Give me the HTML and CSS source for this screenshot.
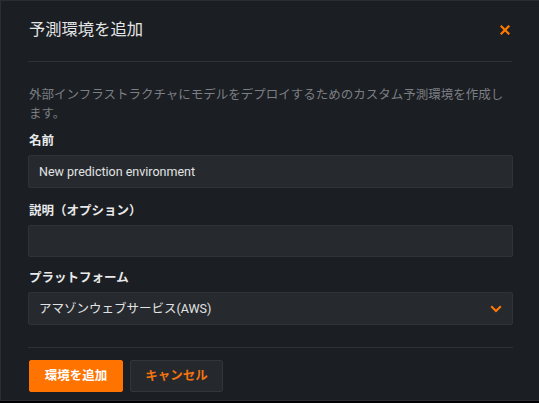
FILE: index.html
```html
<!DOCTYPE html>
<html lang="ja">
<head>
<meta charset="utf-8">
<title>予測環境を追加</title>
<link rel="stylesheet" href="styles.css">
</head>
<body>
<div class="modal">
  <div class="header">
    <h1 class="title">予測環境を追加</h1>
    <button class="close" aria-label="閉じる">
      <svg width="10" height="10" viewBox="0 0 10 10"><path d="M1.5 1.5 L8.5 8.5 M8.5 1.5 L1.5 8.5" stroke="#ff7a00" stroke-width="2.2" stroke-linecap="square" fill="none"/></svg>
    </button>
  </div>
  <div class="body">
    <p class="desc">外部インフラストラクチャにモデルをデプロイするためのカスタム予測環境を作成します。</p>
    <div class="group">
      <label class="label">名前</label>
      <div class="input">New prediction environment</div>
    </div>
    <div class="group">
      <label class="label">説明（オプション）</label>
      <div class="input short"></div>
    </div>
    <div class="group">
      <label class="label">プラットフォーム</label>
      <div class="input select">
        <span>アマゾンウェブサービス(AWS)</span>
        <svg class="chev" width="12" height="8" viewBox="0 0 12 8"><path d="M1.2 1.2 L6 6 L10.8 1.2" stroke="#ff7a00" stroke-width="2" fill="none"/></svg>
      </div>
    </div>
  </div>
  <div class="footer">
    <button class="btn primary">環境を追加</button>
    <button class="btn secondary">キャンセル</button>
  </div>
</div>
</body>
</html>
```

FILE: styles.css
```css
* { box-sizing: border-box; }
html, body {
  margin: 0;
  padding: 0;
  background: #000;
}
body {
  font-family: Roboto, "Noto Sans CJK JP", sans-serif;
  width: 539px;
  height: 403px;
  overflow: hidden;
}
.modal {
  width: 540px;
  height: 401px;
  background: #1b1e22;
  border: 1px solid #2a2e33;
  display: flex;
  flex-direction: column;
}
.header {
  height: 61px;
  margin: 0 27px 0 27px;
  border-bottom: 1px solid #2e3236;
  display: flex;
  align-items: center;
  justify-content: space-between;
  padding-left: 1px;
  padding-bottom: 3px;
}
.title {
  margin: 0;
  font-size: 16.3px;
  font-weight: 400;
  color: #e4e5e6;
  line-height: 22px;
}
.close {
  background: none;
  border: 0;
  padding: 0;
  margin-right: 2px;
  width: 10px;
  height: 10px;
  display: flex;
}
.body {
  padding: 23px 0 0 27px;
  width: 512px;
}
.desc {
  margin: 0 0 9px 1px;
  font-size: 12.5px;
  line-height: 19px;
  color: #7b7f84;
}
.group {
  margin-bottom: 12px;
}
.group:first-of-type { margin-bottom: 14px; }
.group:last-child { margin-bottom: 0; }
.label {
  display: block;
  margin-left: 1px;
  font-size: 12.5px;
  font-weight: 700;
  color: #e8e9ea;
  line-height: 18px;
  margin-bottom: 5px;
}
.input {
  height: 33px;
  background: #262a2e;
  border: 1px solid #2f3338;
  border-radius: 2px;
  padding: 0 10px;
  font-size: 12.5px;
  line-height: 31px;
  color: #e2e3e4;
  display: flex;
  align-items: center;
}
.short { height: 32px; }
.select {
  justify-content: space-between;
  padding-right: 10px;
}
.footer {
  margin: 22px 26px 0 27px;
  border-top: 1px solid #2e3236;
  padding-top: 12px;
  display: flex;
  gap: 7px;
}
.btn {
  height: 32px;
  padding: 0;
  font-family: Roboto, "Noto Sans CJK JP", sans-serif;
  font-size: 12.5px;
  font-weight: 700;
  border-radius: 2px;
  line-height: 30px;
  white-space: nowrap;
  text-align: center;
}
.primary {
  width: 94px;
  margin-left: 1px;
  background: #ff7300;
  border: 1px solid #ff7300;
  color: #ffffff;
}
.secondary {
  width: 93px;
  background: #25292d;
  border: 1px solid #32363b;
  color: #f2730f;
}
```
